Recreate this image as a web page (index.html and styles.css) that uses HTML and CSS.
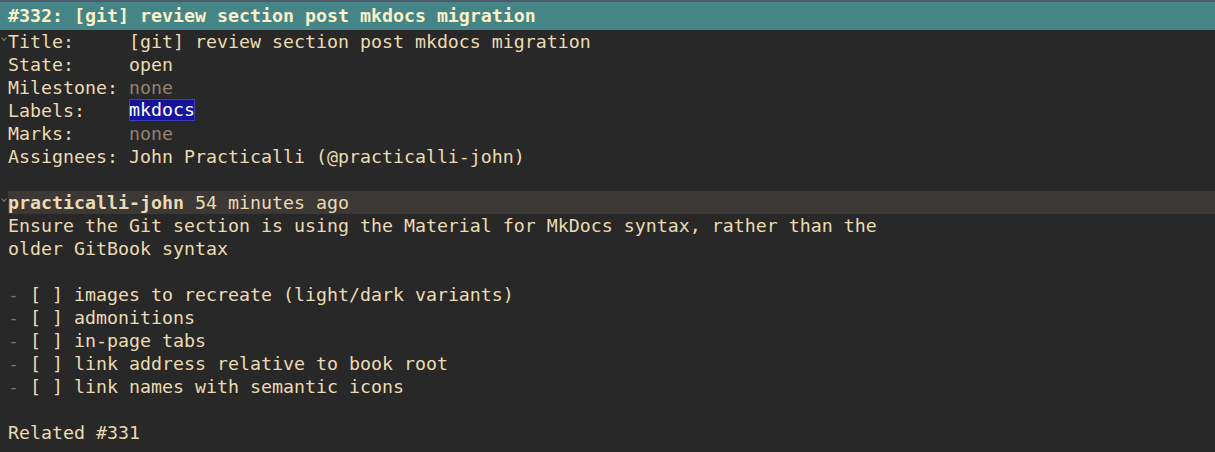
FILE: index.html
```html
<!DOCTYPE html>
<html>
<head>
<meta charset="utf-8">
<link rel="stylesheet" href="styles.css">
</head>
<body>
<div class="screen">
  <div class="header">#332: [git] review section post mkdocs migration</div>
  <div class="body">
    <div class="line"><span class="gutter"><svg width="8" height="23" viewBox="0 0 8 23"><polyline points="1.5,7.5 4,10.5 6.5,7.5" fill="none" stroke="#928374" stroke-width="1.1"/></svg></span><span class="text">Title:     [git] review section post mkdocs migration</span></div>
    <div class="line"><span class="gutter"></span><span class="text">State:     open</span></div>
    <div class="line"><span class="gutter"></span><span class="text">Milestone: <span class="dim">none</span></span></div>
    <div class="line"><span class="gutter"></span><span class="text">Labels:    <span class="label">mkdocs</span></span></div>
    <div class="line"><span class="gutter"></span><span class="text">Marks:     <span class="dim">none</span></span></div>
    <div class="line"><span class="gutter"></span><span class="text">Assignees: John Practicalli (@practicalli-john)</span></div>
    <div class="line"><span class="gutter"></span><span class="text"></span></div>
    <div class="line"><span class="gutter"><svg width="8" height="23" viewBox="0 0 8 23"><polyline points="1.5,7.5 4,10.5 6.5,7.5" fill="none" stroke="#928374" stroke-width="1.1"/></svg></span><span class="text comment-head"><b class="author">practicalli-john</b> 54 minutes ago</span></div>
    <div class="line"><span class="gutter"></span><span class="text">Ensure the Git section is using the Material for MkDocs syntax, rather than the</span></div>
    <div class="line"><span class="gutter"></span><span class="text">older GitBook syntax</span></div>
    <div class="line"><span class="gutter"></span><span class="text"></span></div>
    <div class="line"><span class="gutter"></span><span class="text"><span class="dash">-</span> [ ] images to recreate (light/dark variants)</span></div>
    <div class="line"><span class="gutter"></span><span class="text"><span class="dash">-</span> [ ] admonitions</span></div>
    <div class="line"><span class="gutter"></span><span class="text"><span class="dash">-</span> [ ] in-page tabs</span></div>
    <div class="line"><span class="gutter"></span><span class="text"><span class="dash">-</span> [ ] link address relative to book root</span></div>
    <div class="line"><span class="gutter"></span><span class="text"><span class="dash">-</span> [ ] link names with semantic icons</span></div>
    <div class="line"><span class="gutter"></span><span class="text"></span></div>
    <div class="line"><span class="gutter"></span><span class="text">Related #331</span></div>
  </div>
</div>
</body>
</html>
```
FILE: styles.css
```css
html, body {
  margin: 0;
  padding: 0;
  background: #282828;
}
.screen {
  width: 1215px;
  height: 452px;
  overflow: hidden;
  background: #282828;
  color: #ebdbb2;
  font-family: "DejaVu Sans Mono", "Liberation Mono", monospace;
  font-size: 18.27px;
}
.header {
  border-top: 2px solid #4f5b6d;
  background: #458588;
  color: #fbf1c7;
  font-weight: bold;
  height: 28px;
  line-height: 27px;
  padding-left: 8px;
  white-space: pre;
}
.body {
  display: flex;
  flex-direction: column;
}
.line {
  display: flex;
  height: 23px;
  line-height: 23px;
}
.gutter {
  flex: 0 0 8px;
  width: 8px;
  height: 23px;
}
.gutter svg {
  display: block;
}
.text {
  flex: 1;
  white-space: pre;
}
.comment-head {
  background: #3c3836;
}
.author {
  font-weight: bold;
}
.dim {
  color: #928374;
}
.dash {
  color: #7c6f64;
}
.label {
  display: inline-block;
  background: #14149e;
  color: #ffffff;
  line-height: 22px;
  height: 22px;
  vertical-align: top;
  box-shadow: inset 0 0 0 1px #3c3cb4;
}
```
